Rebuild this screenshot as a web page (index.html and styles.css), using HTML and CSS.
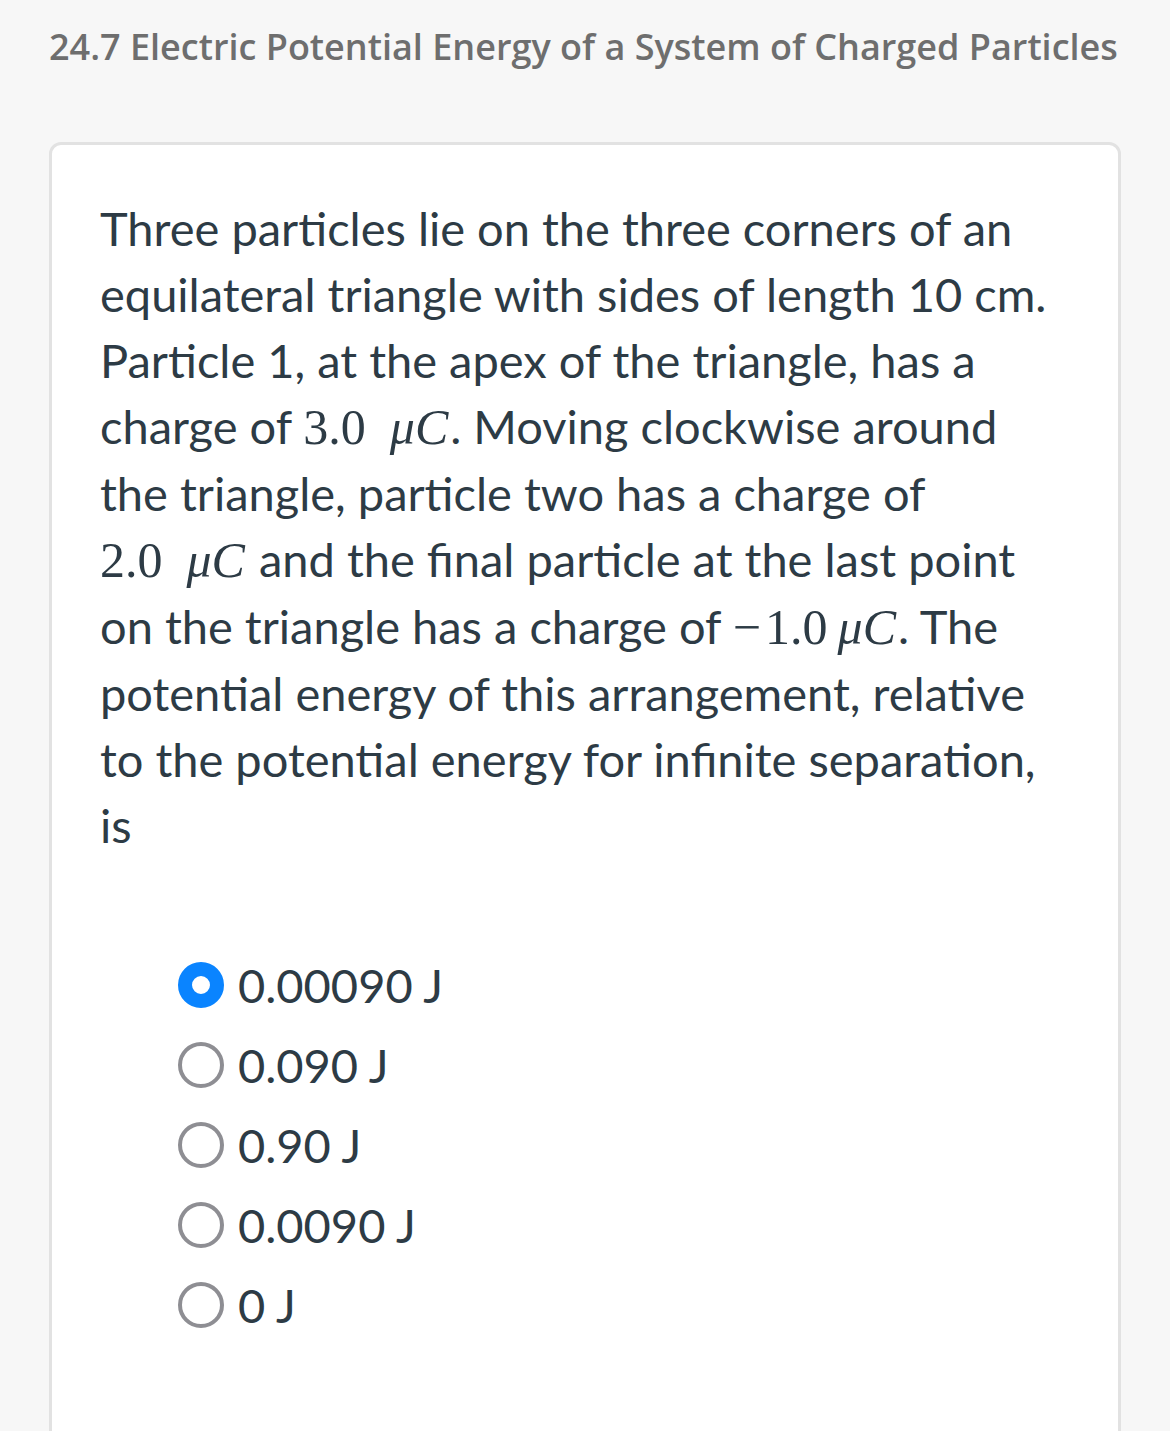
FILE: index.html
```html
<!DOCTYPE html>
<html>
<head>
<meta charset="utf-8">
<link rel="stylesheet" href="styles.css">
</head>
<body>
<div class="page">
  <h1 class="title">24.7 Electric Potential Energy of a System of Charged Particles</h1>
  <div class="card">
    <p class="question">Three particles lie on the three corners of an equilateral triangle with sides of length 10 cm. Particle 1, at the apex of the triangle, has a charge of <span class="math">3.0<span class="sp"></span><i>μC</i></span>. Moving clockwise around the triangle, particle two has a charge of <span class="math">2.0<span class="sp"></span><i>μC</i></span> and the final particle at the last point on the triangle has a charge of <span class="math">−&#8202;1.0&#8201;<i>μC</i></span>. The potential energy of this arrangement, relative to the potential energy for infinite separation, is</p>
    <ul class="options">
      <li class="option"><span class="radio checked"></span><span class="label">0.00090 J</span></li>
      <li class="option"><span class="radio"></span><span class="label">0.090 J</span></li>
      <li class="option"><span class="radio"></span><span class="label">0.90 J</span></li>
      <li class="option"><span class="radio"></span><span class="label">0.0090 J</span></li>
      <li class="option"><span class="radio"></span><span class="label">0 J</span></li>
    </ul>
  </div>
</div>
</body>
</html>
```
FILE: styles.css
```css
html, body {
  margin: 0;
  padding: 0;
  background: #f7f7f7;
}
.page {
  padding: 22px 49px 0 49px;
  height: 1431px;
  box-sizing: border-box;
  overflow: hidden;
}
.title {
  margin: 0;
  font-family: "Open Sans", sans-serif;
  font-weight: 600;
  font-size: 36px;
  line-height: 50px;
  color: #6e6e6e;
  white-space: nowrap;
}
.card {
  margin-top: 70px;
  background: #fff;
  border: 3px solid #e2e2e2;
  border-radius: 12px;
  padding: 50px 58px 200px 48px;
  min-height: 1400px;
}
.question {
  margin: 0;
  font-family: Lato, sans-serif;
  font-size: 47px;
  line-height: 66px;
  color: #2d3b45;
}
.math {
  font-family: "Liberation Serif", serif;
  font-size: 50px;
  white-space: nowrap;
}
.math i {
  font-style: italic;
  padding-right: 2px;
}
.sp {
  display: inline-block;
  width: 24px;
}
.options {
  list-style: none;
  margin: 98px 0 0 0;
  padding: 0 0 0 78px;
  display: flex;
  flex-direction: column;
  gap: 22px;
}
.option {
  display: flex;
  align-items: center;
  gap: 14px;
  height: 58px;
  font-family: Lato, sans-serif;
  font-size: 47px;
  color: #2d3b45;
}
.radio {
  width: 46px;
  height: 46px;
  box-sizing: border-box;
  border-radius: 50%;
  border: 4px solid #8e8e93;
  background: #fff;
}
.radio.checked {
  border: 14px solid #0a84ff;
}
```
